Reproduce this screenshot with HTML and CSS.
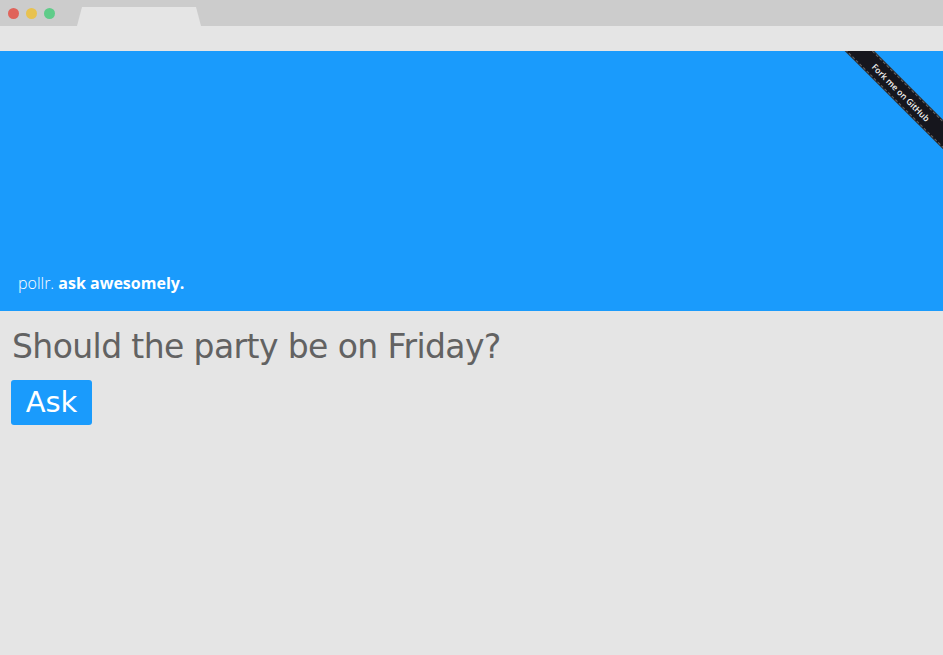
FILE: index.html
```html
<!DOCTYPE html>
<html>
<head>
<meta charset="utf-8">
<link rel="stylesheet" href="styles.css">
</head>
<body>
<div class="chrome">
  <div class="titlebar">
    <span class="dot red"></span>
    <span class="dot yellow"></span>
    <span class="dot green"></span>
    <div class="tab"></div>
  </div>
  <div class="toolbar"></div>
</div>
<header class="hero">
  <div class="brand"><span class="light">pollr.</span> <span class="bold">ask awesomely.</span></div>
  <div class="ribbon"><span>Fork me on GitHub</span></div>
</header>
<main class="content">
  <h1 class="question">Should the party be on Friday?</h1>
  <button class="ask">Ask</button>
</main>
</body>
</html>
```
FILE: styles.css
```css
html, body {
  margin: 0;
  padding: 0;
  background: #e5e5e5;
  height: 100%;
  overflow: hidden;
}
.chrome {
  display: flex;
  flex-direction: column;
}
.titlebar {
  height: 26px;
  background: #cccccc;
  display: flex;
  align-items: flex-start;
  padding-left: 8px;
  gap: 7px;
  box-sizing: border-box;
  padding-top: 8px;
  position: relative;
}
.dot {
  width: 11px;
  height: 11px;
  border-radius: 50%;
  display: block;
}
.red { background: #e0645b; }
.yellow { background: #e8c250; }
.green { background: #5fcc89; }
.tab {
  position: absolute;
  left: 77px;
  top: 7px;
  width: 124px;
  height: 19px;
  background: #e5e5e5;
  clip-path: polygon(5px 0, 119px 0, 124px 19px, 0 19px);
  border-radius: 3px 3px 0 0;
}
.toolbar {
  height: 25px;
  background: #e5e5e5;
}
.hero {
  height: 260px;
  background: #1a9bfc;
  position: relative;
  overflow: hidden;
  display: flex;
  flex-direction: column;
  justify-content: flex-end;
  box-sizing: border-box;
  padding: 0 0 16px 18px;
}
.brand {
  font-family: "Open Sans", sans-serif;
  font-size: 16px;
  color: #ffffff;
  line-height: 24px;
}
.brand .light { font-weight: 300; }
.brand .bold { font-weight: 700; }
.ribbon {
  position: absolute;
  top: 32px;
  right: -58px;
  width: 200px;
  height: 19px;
  background: #16161d;
  transform: rotate(45deg);
  display: flex;
  align-items: center;
  justify-content: center;
  box-sizing: border-box;
  border-top: 1px dashed #666;
  border-bottom: 1px dashed #666;
  box-shadow: 0 0 0 1px #333;
}
.ribbon span {
  font-family: "Open Sans", sans-serif;
  font-weight: 600;
  font-size: 8.5px;
  color: #f2f2f2;
  white-space: nowrap;
}
.content {
  padding: 0 11px;
  display: flex;
  flex-direction: column;
  align-items: flex-start;
}
.question {
  margin: 16px 0 0 1px;
  font-family: "DejaVu Sans", sans-serif;
  font-weight: normal;
  font-size: 33px;
  letter-spacing: -0.6px;
  line-height: 40px;
  color: #626262;
}
.ask {
  margin-top: 13px;
  width: 81px;
  height: 45px;
  border: none;
  border-radius: 3px;
  background: #1a9bfc;
  color: #ffffff;
  font-family: "DejaVu Sans", sans-serif;
  font-size: 29px;
  padding: 0;
  line-height: 45px;
}
```
